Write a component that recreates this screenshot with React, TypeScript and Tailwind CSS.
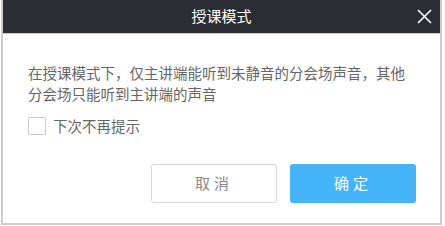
export default function App() {
  return (
    <div className="h-[226px] w-[445px] bg-white pl-px font-['Noto_Sans_CJK_SC','Noto_Sans',sans-serif]">
      <div className="flex h-[225px] w-[441px] flex-col border-2 border-t-0 border-[#cdcdcd]">
        <div className="relative flex h-[34px] shrink-0 items-center justify-center border-b border-[#c4c4c4] bg-[#2a2d34]">
          <span className="text-[15px] text-white">授课模式</span>
          <svg
            className="absolute right-[8px] top-[9px]"
            width="15"
            height="15"
            viewBox="0 0 15 15"
            fill="none"
            stroke="#ffffff"
            strokeWidth="1.6"
          >
            <path d="M1 1 L14 14 M14 1 L1 14" />
          </svg>
        </div>
        <div className="flex flex-col pl-[25px] pr-[24px] pt-[28px]">
          <p className="text-[14.5px] leading-[21px] text-[#666666]">
            在授课模式下，仅主讲端能听到未静音的分会场声音，其他分会场只能听到主讲端的声音
          </p>
          <label className="mt-[12px] flex items-center">
            <span className="h-[18px] w-[18px] rounded-[2px] border border-[#c8c8c8] bg-white" />
            <span className="ml-[7px] text-[14.5px] leading-[20px] text-[#666666]">下次不再提示</span>
          </label>
          <div className="mt-[28px] flex justify-end gap-[13px]">
            <button className="h-[39px] w-[126px] rounded-[3px] border border-[#d6d6d6] bg-white text-[15px] tracking-[4px] text-[#888888]">
              取消
            </button>
            <button className="h-[39px] w-[126px] rounded-[3px] bg-[#46b4f8] text-[15px] tracking-[4px] text-white">
              确定
            </button>
          </div>
        </div>
      </div>
    </div>
  );
}
